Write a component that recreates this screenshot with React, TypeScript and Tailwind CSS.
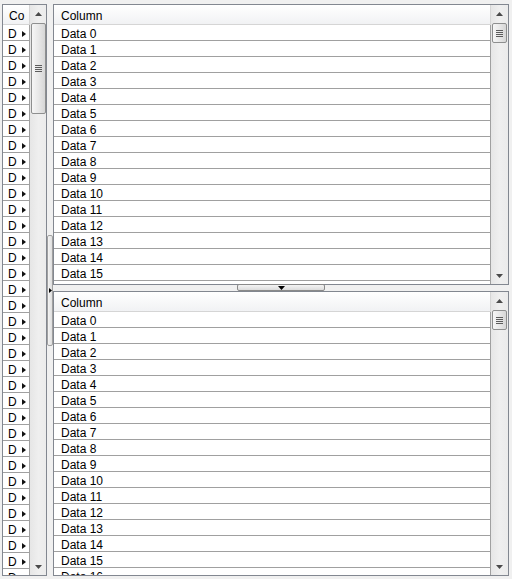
import React from "react";

const font = { fontFamily: '"Liberation Sans", Arial, sans-serif' };

function UpArrow() {
  return (
    <svg width="7" height="4" viewBox="0 0 7 4">
      <path d="M0 4 L3.5 0 L7 4 Z" fill="#4a4a4a" />
    </svg>
  );
}

function DownArrow() {
  return (
    <svg width="7" height="4" viewBox="0 0 7 4">
      <path d="M0 0 L7 0 L3.5 4 Z" fill="#4a4a4a" />
    </svg>
  );
}

function Scrollbar({ thumb }: { thumb: string }) {
  return (
    <div className="w-[17px] shrink-0 flex flex-col bg-gradient-to-r from-[#e6e6e6] via-[#efefef] to-[#ebebeb]">
      <div className="h-[17px] flex items-center justify-center">
        <UpArrow />
      </div>
      <div className="flex-1 px-[1px] pt-[1px]">
        <div
          className={`${thumb} rounded-[2px] border border-[#8e8f8f] bg-gradient-to-r from-[#f6f6f6] via-[#e8e8e8] to-[#d6d6d6] flex flex-col items-center justify-center gap-[1px]`}
        >
          <div className="w-[7px] h-px bg-[#5c5c5c]" />
          <div className="w-[7px] h-px bg-[#5c5c5c]" />
          <div className="w-[7px] h-px bg-[#5c5c5c]" />
          <div className="w-[7px] h-px bg-[#5c5c5c]" />
        </div>
      </div>
      <div className="h-[17px] flex items-center justify-center">
        <DownArrow />
      </div>
    </div>
  );
}

function DataPanel({ thumb, className }: { thumb: string; className: string }) {
  const rows = Array.from({ length: 18 }, (_, i) => i);
  return (
    <div className={`${className} flex border border-[#828790] bg-white overflow-hidden`}>
      <div className="flex-1 flex flex-col overflow-hidden">
        <div className="h-[20px] shrink-0 flex items-center pl-[7px] pt-[2px] border-b border-r border-[#d5d5d5] bg-gradient-to-b from-white to-[#f1f2f4] text-[12px] text-black">
          Column
        </div>
        {rows.map((i) => (
          <div
            key={i}
            className="h-[16px] shrink-0 flex items-center pl-[7px] pt-[2px] border-b border-r border-[#a0a0a0] text-[12px] text-black leading-none"
          >
            Data {i}
          </div>
        ))}
      </div>
      <Scrollbar thumb={thumb} />
    </div>
  );
}

function LeftPanel() {
  const rows = Array.from({ length: 36 }, (_, i) => i);
  return (
    <div className="w-[45px] shrink-0 flex border border-[#828790] bg-white overflow-hidden">
      <div className="w-[27px] shrink-0 flex flex-col overflow-hidden">
        <div className="h-[20px] shrink-0 flex items-center pl-[6px] pt-[2px] border-b border-r border-[#d5d5d5] bg-gradient-to-b from-white to-[#f1f2f4] text-[12px] text-black">
          Co
        </div>
        {rows.map((i) => (
          <div
            key={i}
            className="h-[16px] shrink-0 flex items-center pl-[5px] pt-[2px] border-b border-r border-[#a0a0a0] text-[12px] text-black leading-none"
          >
            <span>D</span>
            <svg width="4" height="6" viewBox="0 0 4 6" className="ml-[5px]">
              <path d="M0 0 L4 3 L0 6 Z" fill="#111" />
            </svg>
          </div>
        ))}
      </div>
      <Scrollbar thumb="h-[91px]" />
    </div>
  );
}

export default function App() {
  return (
    <div
      className="w-[512px] h-[579px] bg-[#f0f0f0] flex pt-[4px] pb-[3px] pl-[2px] pr-[3px] overflow-hidden"
      style={font}
    >
      <LeftPanel />
      {/* vertical splitter */}
      <div className="w-[6px] shrink-0 flex items-center">
        <div className="w-[6px] h-[111px] border border-[#a0a0a0] rounded-[2px] bg-gradient-to-r from-[#f4f4f4] to-[#dedede] flex items-center justify-center">
          <svg width="3" height="5" viewBox="0 0 3 5">
            <path d="M0 0 L3 2.5 L0 5 Z" fill="#000" />
          </svg>
        </div>
      </div>
      <div className="w-[456px] shrink-0 flex flex-col">
        <DataPanel className="h-[281px] shrink-0" thumb="h-[20px]" />
        {/* horizontal splitter */}
        <div className="h-[6px] shrink-0 flex justify-center">
          <div className="w-[88px] h-[7px] -mt-[1px] border border-[#8a8a8a] rounded-[2px] bg-gradient-to-b from-[#f4f4f4] to-[#dcdcdc] flex items-center justify-center">
            <svg width="7" height="4" viewBox="0 0 7 4">
              <path d="M0 0 L7 0 L3.5 4 Z" fill="#000" />
            </svg>
          </div>
        </div>
        <DataPanel className="flex-1" thumb="h-[20px]" />
      </div>
    </div>
  );
}
